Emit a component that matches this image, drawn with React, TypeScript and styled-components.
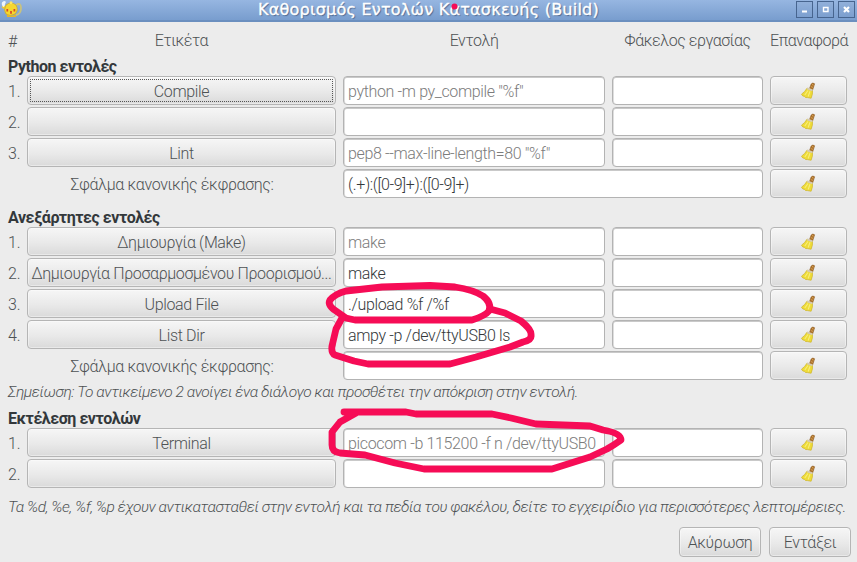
import React from "react";
import styled, { createGlobalStyle } from "styled-components";

const GlobalStyle = createGlobalStyle`
  * { box-sizing: border-box; }
  body { margin: 0; background: #ececec; overflow: hidden; }
`;

const Dialog = styled.main`
  position: relative;
  width: 857px;
  height: 562px;
  display: flex;
  flex-direction: column;
  overflow: hidden;
  background: #ececec;
  color: #4e5254;
  font: 300 16px/20px Roboto, "Open Sans", sans-serif;
  letter-spacing: -0.35px;
  white-space: nowrap;
`;

const TitleBar = styled.header`
  display: grid;
  grid-template-columns: 54px 1fr 54px;
  flex: 0 0 22px;
  height: 22px;
  background: linear-gradient(#96b6e1, #789dce 20px, #6b8fbf 20px);
`;

const Title = styled.h1`
  margin: 0;
  text-align: center;
  color: #fff;
  font: 400 16px/19px "DejaVu Sans", sans-serif;
  letter-spacing: 0.24px;
  -webkit-text-stroke: 0.35px #fff;
  text-shadow: 1px 1px 1px #48658e;
`;

const AppIcon = styled.svg`
  display: block;
  width: 21px;
  height: 20px;
  margin-left: 1px;
`;

const WindowButtons = styled.div`
  display: flex;
  gap: 4px;
  padding-top: 1px;
  margin-left: -7px;
`;

const WindowButton = styled.button`
  width: 17px;
  height: 17px;
  padding: 0;
  border: 1px solid #47658f;
  background: linear-gradient(#91b0da, #7c9fcf);
  svg { display: block; width: 15px; height: 15px; }
`;

const Body = styled.div`
  display: flex;
  flex-direction: column;
  padding: 4px 10px 0 8px;
`;

const Row = styled.div`
  display: flex;
  align-items: center;
  height: 29px;
`;

const Columns = styled.div<{ $regex?: boolean }>`
  display: grid;
  grid-template-columns: ${(p) => (p.$regex ? "328px 420px 77px" : "309px 262px 151px 77px")};
  column-gap: 7px;
  flex: 1;
  align-items: center;
`;

const Index = styled.span`
  width: 19px;
  flex: none;
  padding-top: 2px;
  letter-spacing: -0.2px;
`;

const HeaderText = styled.span`
  text-align: center;
  letter-spacing: -0.45px;
  padding-top: 1px;
`;

const Section = styled.section<{ $top: number }>`
  display: flex;
  flex-direction: column;
  gap: 2px;
  margin-top: ${(p) => p.$top}px;
`;

const SectionTitle = styled.h2`
  margin: 0;
  height: 18px;
  color: #33383b;
  font-size: 16px;
  line-height: 22px;
  font-weight: 700;
  letter-spacing: -0.46px;
`;

const PushButton = styled.button<{ $focused?: boolean }>`
  height: 30px;
  min-width: 0;
  padding: 2px 2px 0;
  border: 1px solid #b5b5b5;
  border-radius: 4px;
  background: linear-gradient(#f6f6f6, #e9e9e9 55%, #dadada);
  box-shadow: inset 0 0 0 1px #ffffff66;
  color: inherit;
  font: inherit;
  letter-spacing: inherit;
  white-space: nowrap;
  display: flex;
  align-items: center;
  justify-content: center;
  outline: ${(p) => (p.$focused ? "1px dotted #555" : "none")};
  outline-offset: -4px;
`;

const CommandButton = styled(PushButton)`
  height: 29px;
`;

const ResetButton = styled(PushButton)`
  height: 29px;
  padding: 0 2px 0 0;
`;

const Entry = styled.div<{ $dim?: boolean }>`
  height: 29px;
  padding: 1px 0 0 4px;
  border: 1px solid #b3b3b3;
  border-radius: 4px;
  background: #fff;
  box-shadow: inset 0 1px 0 #c9c9c9, inset 1px 0 0 #dedede;
  line-height: 27px;
  color: ${(p) => (p.$dim ? "#7c7c7c" : "#34383a")};
`;

const RegexLabel = styled.span`
  text-align: center;
  padding-top: 2px;
`;

const Note = styled.p<{ $top: number }>`
  margin: ${(p) => p.$top}px 0 0;
  height: 20px;
  line-height: 20px;
  font-size: 15.5px;
  font-style: italic;
  letter-spacing: -0.46px;
`;

const Actions = styled.footer`
  display: grid;
  grid-template-columns: 82px 82px;
  justify-content: end;
  gap: 8px;
  margin-top: 10px;
  margin-right: -4px;
`;

const Annotation = styled.svg`
  position: absolute;
  inset: 0;
  pointer-events: none;
`;

const Broom = () => (
  <svg width="16" height="17" viewBox="0 0 16 17">
    <path d="M9.6 6.4 11.2 2Q12.8.2 14.6 1.8L12.6 8Z" fill="#b0752c" stroke="#8c571c" strokeWidth=".6" />
    <path d="M12 2.4l1.6.8M11.2 4.6l1.6.8" stroke="#dfae66" strokeWidth=".8" />
    <path d="M7 6.2Q5 9.8 1.5 12.2L2.8 14l1.5.3 1.2 1.2 2.2.1 3.4.6Q12.9 12 12.5 8.2Z" fill="#eedb38" stroke="#d0b82c" strokeWidth=".8" />
    <path d="M8 8.5 4.8 13M10 9.2 8.2 14.5" stroke="#f8ee7a" strokeWidth="1.1" />
    <path d="M7.2 6.3 12.5 8.4" stroke="#d5cbb4" strokeWidth="1.8" />
  </svg>
);

type Command = { label: string; command?: string; dim?: boolean; focused?: boolean };

const CommandRow = ({ n, item }: { n: number; item: Command }) => (
  <Row>
    <Index>{n}.</Index>
    <Columns>
      <CommandButton $focused={item.focused}>{item.label}</CommandButton>
      <Entry $dim={item.dim}>{item.command}</Entry>
      <Entry />
      <ResetButton aria-label="Επαναφορά"><Broom /></ResetButton>
    </Columns>
  </Row>
);

const RegexRow = ({ value }: { value?: string }) => (
  <Row>
    <Columns $regex>
      <RegexLabel>Σφάλμα κανονικής έκφρασης:</RegexLabel>
      <Entry>{value}</Entry>
      <ResetButton aria-label="Επαναφορά"><Broom /></ResetButton>
    </Columns>
  </Row>
);

const python: Command[] = [
  { label: "Compile", command: 'python -m py_compile "%f"', dim: true, focused: true },
  { label: "" },
  { label: "Lint", command: 'pep8 --max-line-length=80 "%f"', dim: true },
];
const independent: Command[] = [
  { label: "Δημιουργία (Make)", command: "make", dim: true },
  { label: "Δημιουργία Προσαρμοσμένου Προορισμού...", command: "make" },
  { label: "Upload File", command: "./upload %f /%f" },
  { label: "List Dir", command: "ampy -p /dev/ttyUSB0 ls" },
];
const execute: Command[] = [
  { label: "Terminal", command: "picocom -b 115200 -f n /dev/ttyUSB0", dim: true },
  { label: "" },
];

export default function App() {
  return (
    <>
      <GlobalStyle />
      <Dialog>
        <TitleBar>
          <AppIcon viewBox="0 0 21 20">
            <path d="M15 5Q20 2 20 8T15 15" fill="none" stroke="#c9c27e" strokeWidth="1.8" />
            <path d="M4 8 1.5 6" stroke="#f0ca2d" strokeWidth="3" />
            <path d="M5 5Q10 1 15 5Q18 10 14 14Q9 17 5 14Q2 10 5 5Z" fill="#f5d72f" stroke="#c8a52b" strokeWidth=".7" />
            <path d="M6 14.5Q10 17 15 14.5V17H6Z" fill="#e5b82b" />
            <circle cx="10" cy="2.8" r="1.5" fill="#ffe45f" />
            <path d="M6.3 9v2.5M10 11v2.8M13.4 9v2.5" stroke="#d84628" strokeWidth="1.7" />
            <path d="M1 5Q0 2 3 1Q6 1 4 4Q4 7 2 7Z" fill="#eef4fa" />
          </AppIcon>
          <Title>Καθορισμός Εντολών Κατασκευής (Build)</Title>
          <WindowButtons>
            <WindowButton aria-label="Ελαχιστοποίηση"><svg viewBox="0 0 15 15"><path d="M5 9.5h5" stroke="#fff" strokeWidth="2" /></svg></WindowButton>
            <WindowButton aria-label="Μεγιστοποίηση"><svg viewBox="0 0 15 15"><path d="M5.5 5.5h4.5v4h-4.5z" fill="none" stroke="#fff" strokeWidth="1.4" /></svg></WindowButton>
            <WindowButton aria-label="Κλείσιμο"><svg viewBox="0 0 15 15"><path d="m5 5 5 5m0-5-5 5" stroke="#fff" strokeWidth="2.2" /></svg></WindowButton>
          </WindowButtons>
        </TitleBar>
        <Body>
          <Row>
            <Index>#</Index>
            <Columns>
              <HeaderText>Ετικέτα</HeaderText>
              <HeaderText>Εντολή</HeaderText>
              <HeaderText>Φάκελος εργασίας</HeaderText>
              <HeaderText>Επαναφορά</HeaderText>
            </Columns>
          </Row>
          <Section $top={1}>
            <SectionTitle>Python εντολές</SectionTitle>
            {python.map((item, i) => <CommandRow key={i} n={i + 1} item={item} />)}
            <RegexRow value="(.+):([0-9]+):([0-9]+)" />
          </Section>
          <Section $top={9}>
            <SectionTitle>Ανεξάρτητες εντολές</SectionTitle>
            {independent.map((item, i) => <CommandRow key={i} n={i + 1} item={item} />)}
            <RegexRow />
          </Section>
          <Note $top={2}>Σημείωση: Το αντικείμενο 2 ανοίγει ένα διάλογο και προσθέτει την απόκριση στην εντολή.</Note>
          <Section $top={6}>
            <SectionTitle>Εκτέλεση εντολών</SectionTitle>
            {execute.map((item, i) => <CommandRow key={i} n={i + 1} item={item} />)}
          </Section>
          <Note $top={9}>Τα %d, %e, %f, %p έχουν αντικατασταθεί στην εντολή και τα πεδία του φακέλου, δείτε το εγχειρίδιο για περισσότερες λεπτομέρειες.</Note>
          <Actions>
            <PushButton>Ακύρωση</PushButton>
            <PushButton>Εντάξει</PushButton>
          </Actions>
        </Body>
        <Annotation width="857" height="562" viewBox="0 0 857 562" fill="none" stroke="#f60c56" strokeWidth="6.8" strokeLinecap="round" strokeLinejoin="round">
          <circle cx="454.5" cy="6.5" r="3" fill="#f60c56" stroke="none" />
          <path d="M346 318 336 311Q327 305 330 300Q335 294 346 291L382 287 430 285.5 455 287Q474 290 483 296Q492 303 489 311Q485 316 472 320H355Q350 319 346 318Z" />
          <path d="M342 318 336 329 332 346Q331 353 335 355L354 361 368 364H450L476 357 510 347 523 342Q532 340 531 335Q532 330 521 321L505 313 490 309" />
          <path d="M344 412H406L416 414H492L511 418 536 424 590 426 603 430Q621 433 621 440Q614 445 607 449L590 457 552 469H424L395 463 365 455 340 453Q332 452 332 445V432L340 422 356 413" />
        </Annotation>
      </Dialog>
    </>
  );
}
